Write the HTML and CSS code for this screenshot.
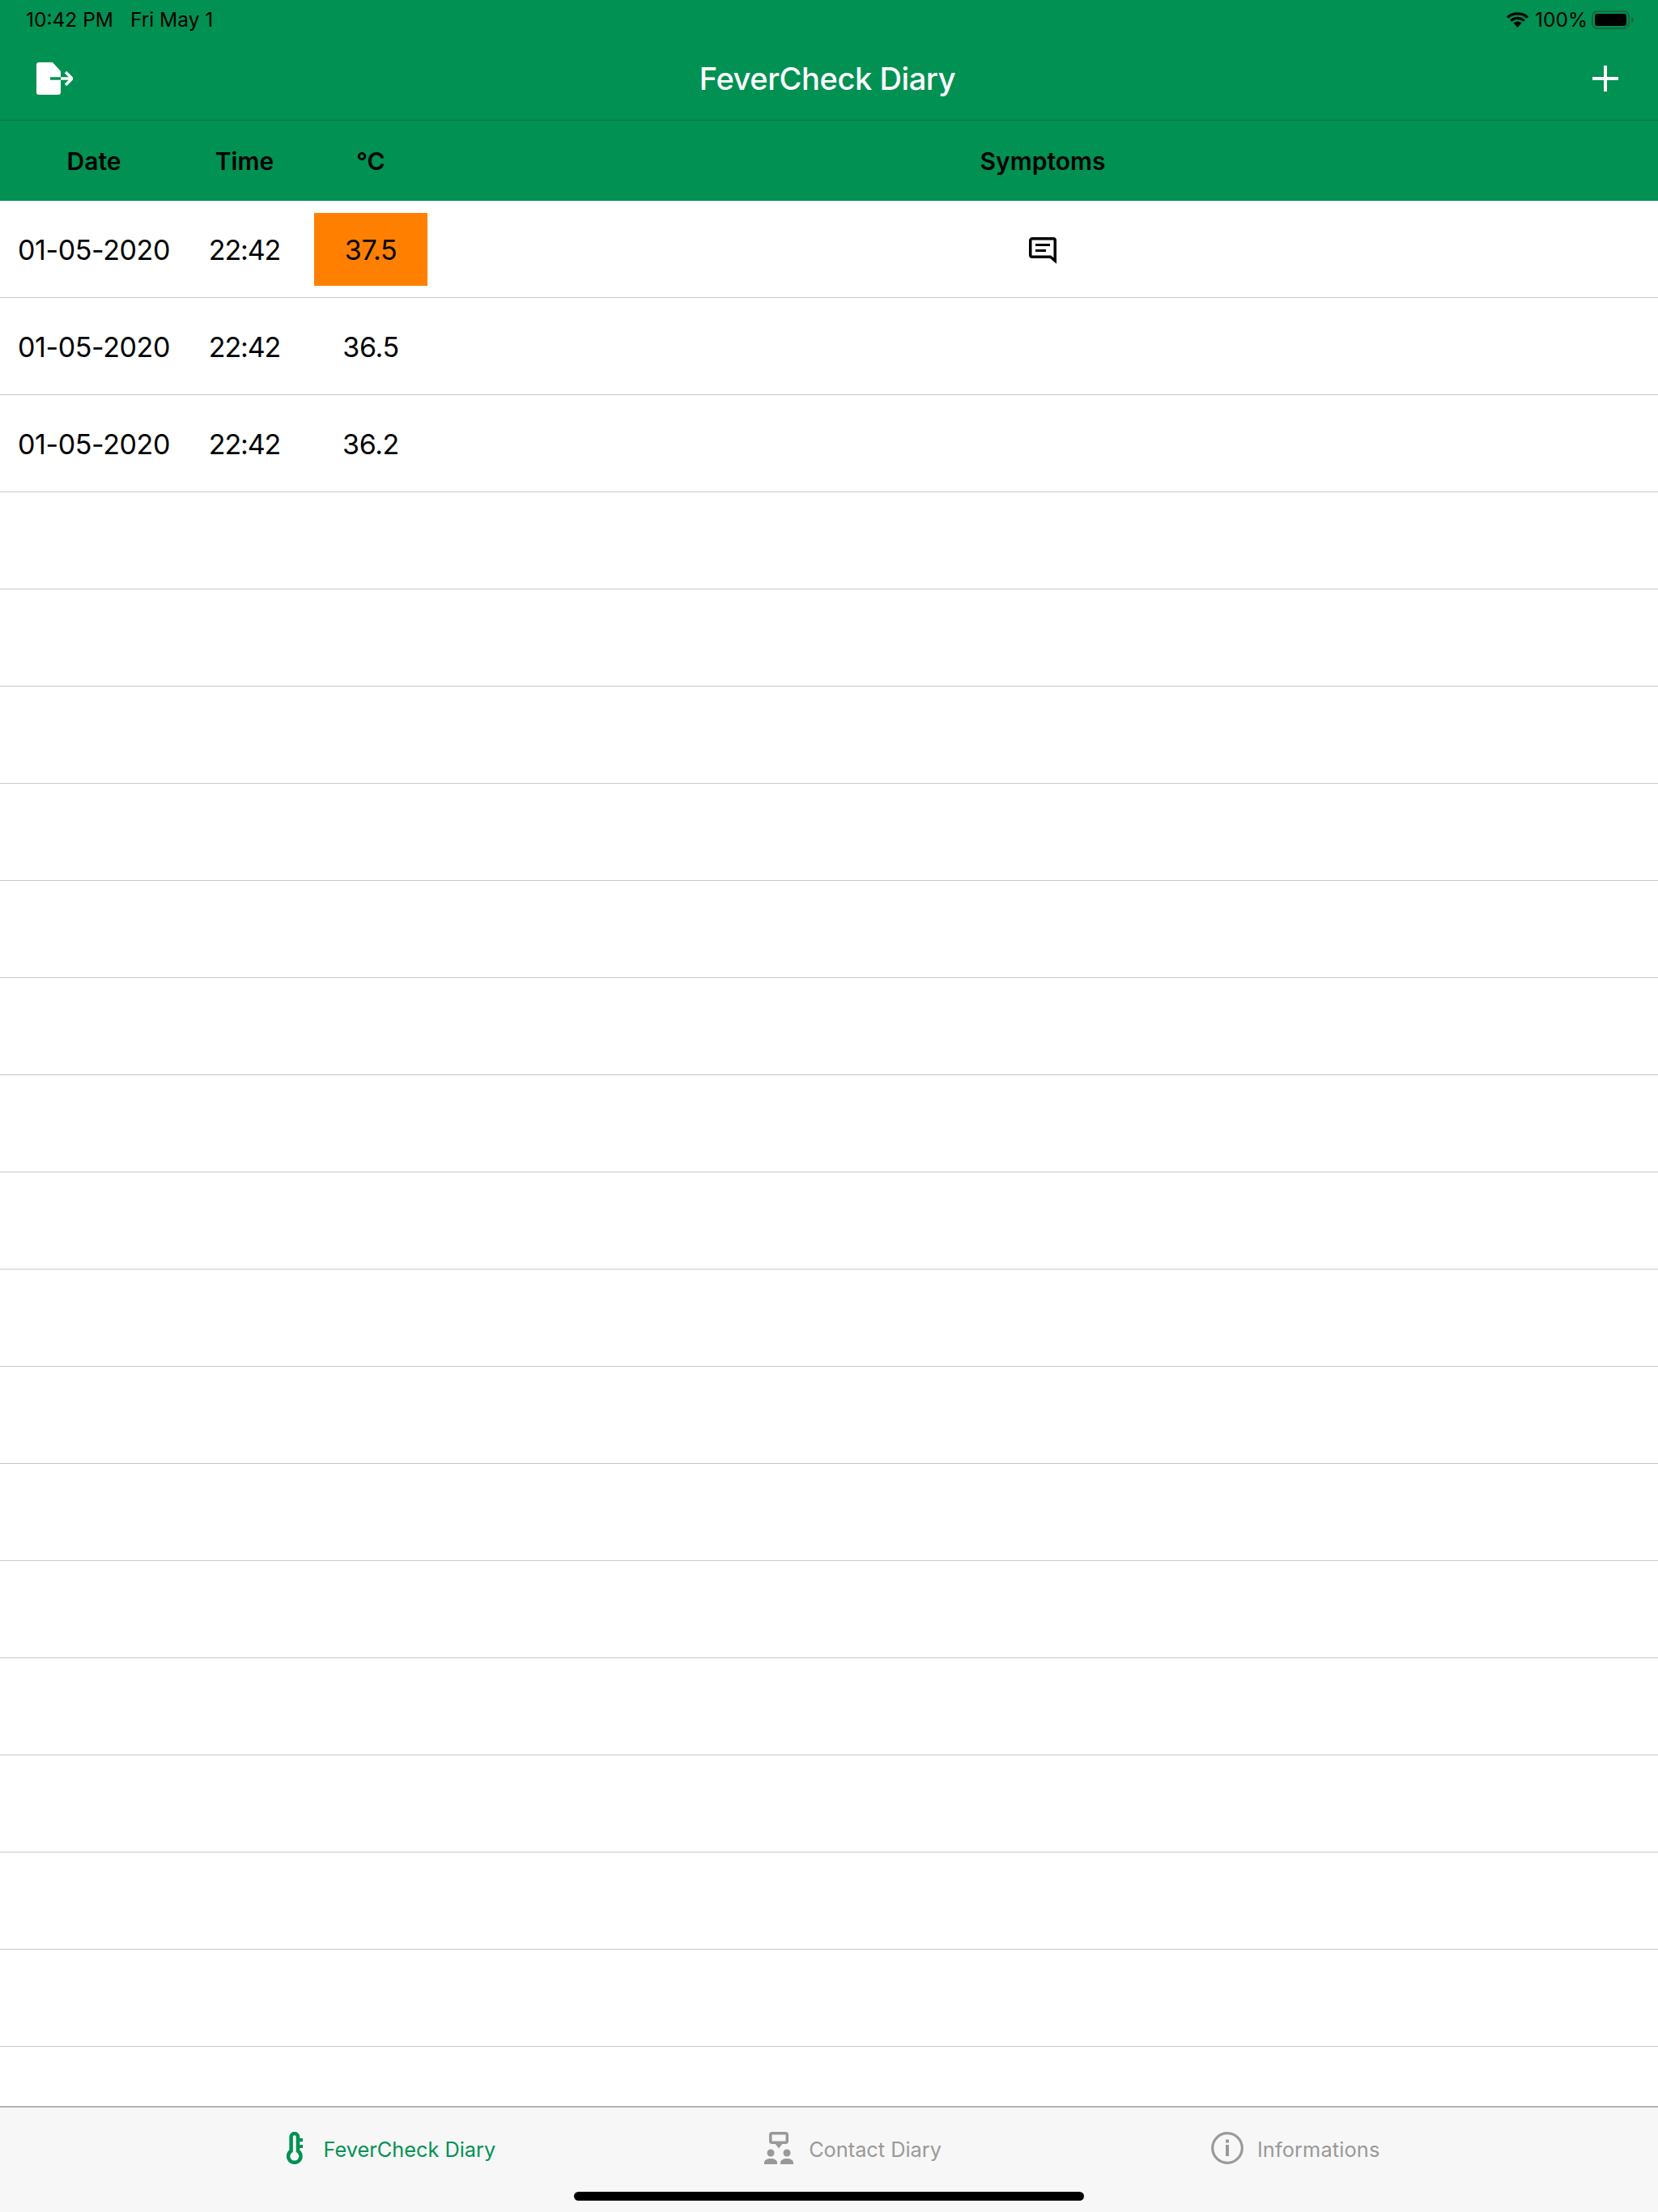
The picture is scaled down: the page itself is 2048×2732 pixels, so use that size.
FILE: index.html
```html
<!DOCTYPE html>
<html lang="en">
<head>
<meta charset="utf-8">
<title>FeverCheck Diary</title>
<link rel="stylesheet" href="styles.css">
</head>
<body>
<div class="app">
  <header class="top">
    <div class="status">
      <div class="status-left"><span>10:42 PM</span><span>Fri May 1</span></div>
      <div class="status-right">
        <svg class="wifi" width="27" height="19" viewBox="0 0 27 19"><path d="M1 6.500C8 .3 19 .3 26 6.500M5.200 10.600C10 6.400 17 6.400 21.800 10.600" fill="none" stroke="#000" stroke-width="3.200"/><path d="M8.600 13.400C11.600 10.800 15.400 10.800 18.400 13.400L13.500 19Z" fill="#000"/></svg>
        <span class="pct">100%</span>
        <svg class="battery" width="52" height="23" viewBox="0 0 52 23"><rect x="1" y="1" width="45" height="21" rx="6" fill="none" stroke="#17683f" stroke-width="2"/><rect x="4" y="4" width="39" height="15" rx="3" fill="#000"/><path d="M49 8c1.800.5 3 1.800 3 3.500s-1.200 3-3 3.500z" fill="#17683f"/></svg>
      </div>
    </div>
    <nav class="navbar">
      <svg class="nav-exit" width="45" height="40" viewBox="0 0 45 40"><path d="M3 0H20L30 11V37a3 3 0 0 1-3 3H3a3 3 0 0 1-3-3V3a3 3 0 0 1 3-3Z" fill="#fff"/><path d="M17 20H30" stroke="#019153" stroke-width="3.500"/><path d="M30 20H43M36 12l8 8-8 8" fill="none" stroke="#fff" stroke-width="3.500"/></svg>
      <h1 class="title">FeverCheck Diary</h1>
      <svg class="nav-add" width="32" height="32" viewBox="0 0 32 32"><path d="M16 0V32M0 16H32" stroke="#fff" stroke-width="4"/></svg>
    </nav>
    <div class="columns row-grid">
      <div>Date</div><div>Time</div><div>°C</div><div>Symptoms</div>
    </div>
  </header>
  <main class="table">
    <div class="row row-grid">
      <div>01-05-2020</div><div class="time">22:42</div><div class="temp hot">37.5</div>
      <div class="note"><svg width="34" height="33" viewBox="0 0 34 33"><path d="M4 1.750H30A2.250 2.250 0 0 1 32.250 4V29L26.500 24.250H4A2.250 2.250 0 0 1 1.750 22V4A2.250 2.250 0 0 1 4 1.750Z" fill="none" stroke="#000" stroke-width="3.500"/><path d="M8 9.500H26M8 16.500H21" stroke="#000" stroke-width="3.200"/></svg></div>
    </div>
    <div class="row row-grid"><div>01-05-2020</div><div class="time">22:42</div><div class="temp">36.5</div><div></div></div>
    <div class="row row-grid"><div>01-05-2020</div><div class="time">22:42</div><div class="temp">36.2</div><div></div></div>
    <div class="row"></div><div class="row"></div><div class="row"></div><div class="row"></div>
    <div class="row"></div><div class="row"></div><div class="row"></div><div class="row"></div>
    <div class="row"></div><div class="row"></div><div class="row"></div><div class="row"></div>
    <div class="row"></div><div class="row"></div><div class="row"></div><div class="row"></div>
  </main>
  <footer class="tabbar">
    <div class="tabs">
      <div class="tab active">
        <svg width="20" height="40" viewBox="0 0 20 40"><path d="M5.600 23.700V6.200a4.200 4.200 0 0 1 8.400 0V23.700A7.700 7.700 0 1 1 5.600 23.700Z" fill="none" stroke="#019153" stroke-width="4.500"/><path d="M13 10H20M13 18H20" stroke="#019153" stroke-width="4"/></svg>
        <span>FeverCheck Diary</span>
      </div>
      <div class="tab tab-contact">
        <svg width="37" height="40" viewBox="0 0 37 40"><rect x="8.750" y="1.750" width="20.500" height="11.500" rx="2" fill="none" stroke="#999" stroke-width="3.500"/><path d="M14 14H24L19 20.500Z" fill="#999"/><circle cx="9" cy="26" r="4.500" fill="#999"/><circle cx="29" cy="26" r="4.500" fill="#999"/><path d="M1 40.500V38C1 35 4.500 33 9 33S17 35 17 38V40.500ZM21 40.500V38C21 35 24.500 33 29 33S37 35 37 38V40.500Z" fill="#999"/></svg>
        <span>Contact Diary</span>
      </div>
      <div class="tab tab-info">
        <svg width="40" height="40" viewBox="0 0 40 40"><circle cx="20" cy="20" r="18.300" fill="none" stroke="#999" stroke-width="3.200"/><rect x="18" y="9.500" width="4" height="4" fill="#999"/><rect x="18" y="16" width="4" height="14" fill="#999"/></svg>
        <span>Informations</span>
      </div>
    </div>
    <div class="home"></div>
  </footer>
</div>
</body>
</html>
```
FILE: styles.css
```css
* { box-sizing: border-box; }
html, body { margin: 0; padding: 0; }
body { font-family: Inter, "Liberation Sans", sans-serif; color: #000; background: #fff; }
.app { width: 2048px; height: 2732px; display: flex; flex-direction: column; overflow: hidden; }
.top { background: #019153; }
.status { height: 48px; display: flex; justify-content: space-between; align-items: center; padding: 0 30px 0 32px; font-size: 24.500px; }
.status-left { display: flex; gap: 21px; }
.status-right { display: flex; align-items: center; }
.pct { margin-left: 8px; margin-right: 5px; }
.navbar { height: 101px; display: grid; grid-template-columns: 1fr auto 1fr; align-items: center; padding: 0 49px 3px 45px; border-bottom: 1px solid #1a6b47; }
.nav-add { justify-self: end; }
.title { margin: 0; font-size: 38px; font-weight: 500; letter-spacing: -0.4px; color: #fff; }
.row-grid { display: grid; grid-template-columns: 232px 140px 172px 1fr; padding-right: 16px; text-align: center; align-items: center; }
.columns { height: 99px; font-size: 30px; font-weight: 600; }
.table { flex: 1; }
.row { height: 120px; border-bottom: 1px solid #c8c8c8; font-size: 34px; letter-spacing: -0.4px; }
.row-grid.row { padding-top: 1px; }
.time { letter-spacing: -1.100px; }
.temp { margin: 0 16px; height: 90px; line-height: 91px; }
.hot { background: #ff8000; }
.note { display: flex; justify-content: center; padding-top: 2px; }
.tabbar { height: 131px; background: #f7f7f7; border-top: 2px solid #b4b4b4; }
.tabs { height: 104px; display: flex; justify-content: center; gap: 331px; padding: 30px 0 0 10px; }
.tab { display: flex; align-items: flex-start; gap: 26px; font-size: 25.300px; color: #999; }
.tab-contact { gap: 19px; margin-right: 2px; }
.tab-info { gap: 17px; }
.tab-info span { letter-spacing: 0.15px; }
.tab span { line-height: 43px; }
.tab.active { color: #019153; }
.home { width: 630px; height: 11px; margin: 0 auto; background: #000; border-radius: 6px; }
```
